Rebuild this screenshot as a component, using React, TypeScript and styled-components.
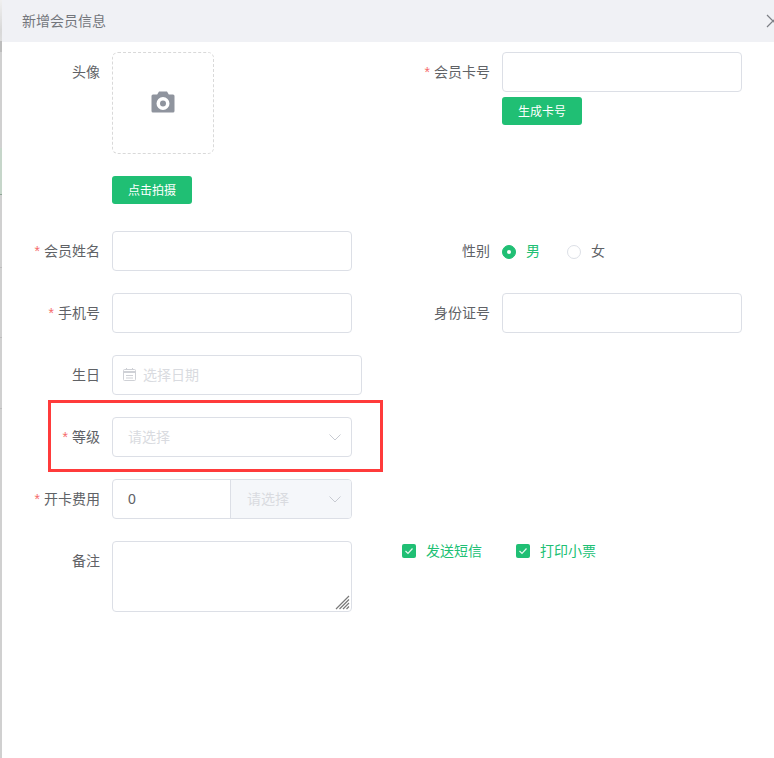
import React from 'react';
import styled, { createGlobalStyle } from 'styled-components';

const GlobalStyle = createGlobalStyle`
  html, body {
    margin: 0;
    padding: 0;
    background: #fff;
  }
  * {
    box-sizing: border-box;
  }
  body {
    font-family: "Liberation Sans", "Noto Sans CJK SC", sans-serif;
    font-size: 14px;
    color: #606266;
  }
`;

const Page = styled.div`
  display: flex;
  width: 774px;
  height: 758px;
  overflow: hidden;
`;

// sliver of the page behind the dialog
const BackdropEdge = styled.div`
  flex: 0 0 2px;
  background: linear-gradient(
    to bottom,
    #f0f0f0 0,
    #d8d8d8 30px,
    #dcdcdc 41px,
    #bdbdbd 41px,
    #bdbdbd 52px,
    #d0d0d0 52px,
    #d0d0d0 148px,
    #c6d6ca 148px,
    #c6d6ca 194px,
    #8fa596 194px,
    #8fa596 195px,
    #d0d0d0 195px,
    #d0d0d0 267px,
    #bdbdbd 267px,
    #bdbdbd 268px,
    #d0d0d0 268px,
    #d0d0d0 337px,
    #bdbdbd 337px,
    #bdbdbd 338px,
    #d0d0d0 338px,
    #d0d0d0 408px,
    #bdbdbd 408px,
    #bdbdbd 409px,
    #d0d0d0 409px
  );
`;

const Dialog = styled.div`
  position: relative;
  flex: 1;
  min-width: 0;
`;

const Header = styled.header`
  display: flex;
  align-items: center;
  justify-content: space-between;
  height: 42px;
  padding: 0 0 2px 20px;
  background: #f0f1f5;
  font-size: 14px;
  color: #73767c;
`;

const CloseIcon = styled.svg`
  width: 8px;
  height: 14px;
  margin-top: 2px;
  flex: none;
`;

const Form = styled.form`
  display: grid;
  grid-template-columns: 388px 384px;
  row-gap: 22px;
  padding-top: 10px;
`;

const TopRow = styled.div`
  grid-column: 1 / -1;
  display: grid;
  grid-template-columns: 388px 384px;
  margin-bottom: 5px;
`;

const Field = styled.div`
  display: flex;
  align-items: flex-start;
`;

const Label = styled.label<{ $wide?: boolean }>`
  flex: 0 0 ${p => (p.$wide ? 100 : 98)}px;
  height: 40px;
  line-height: 40px;
  margin-right: 12px;
  text-align: right;
  font-size: 14px;
  color: #606266;
  white-space: nowrap;
`;

const Required = styled.span`
  color: #f56c6c;
  margin-right: 4px;
`;

const Control = styled.div`
  display: flex;
  flex-direction: column;
  align-items: flex-start;
`;

const AvatarBox = styled.div`
  display: flex;
  align-items: center;
  justify-content: center;
  width: 102px;
  height: 102px;
  padding-bottom: 2px;
  border: 1px dashed #d9d9d9;
  border-radius: 6px;
  margin-bottom: 22px;
`;

const Button = styled.button<{ $top?: number }>`
  width: 80px;
  height: 28px;
  margin-top: ${p => p.$top ?? 0}px;
  padding: 0 0 2px;
  border: none;
  border-radius: 3px;
  background: #20bf74;
  color: #fff;
  font-family: inherit;
  font-size: 12px;
`;

const Input = styled.div<{ $width?: number }>`
  display: flex;
  align-items: center;
  width: ${p => p.$width ?? 240}px;
  height: 40px;
  padding: 0 15px 2px;
  border: 1px solid #dcdfe6;
  border-radius: 4px;
  background: #fff;
  font-size: 14px;
  color: #606266;
`;

const DateInput = styled(Input)`
  padding-left: 9px;
  gap: 6px;
`;

const Placeholder = styled.span`
  flex: 1;
  color: #d9dbe0;
`;

const Chevron = styled.svg`
  width: 16px;
  height: 16px;
  flex: none;
  margin-right: -7px;
  margin-bottom: -2px;
`;

const InputGroup = styled.div`
  display: flex;
  width: 240px;
  height: 40px;
  border: 1px solid #dcdfe6;
  border-radius: 4px;
  overflow: hidden;
`;

const GroupValue = styled.div`
  display: flex;
  align-items: center;
  width: 117px;
  padding-left: 15px;
  font-size: 14px;
  color: #606266;
`;

const GroupSelect = styled.div`
  display: flex;
  align-items: center;
  flex: 1;
  padding: 0 15px 2px 16px;
  border-left: 1px solid #dcdfe6;
  background: #f5f7fa;
  font-size: 14px;
`;

const RadioGroup = styled.div`
  display: flex;
  align-items: center;
  height: 40px;
`;

const RadioItem = styled.span<{ $checked?: boolean }>`
  display: flex;
  align-items: center;
  gap: 10px;
  margin-right: 27px;
  font-size: 14px;
  line-height: 18px;
  color: ${p => (p.$checked ? '#20bf74' : '#606266')};
`;

const RadioDot = styled.span<{ $checked?: boolean }>`
  display: flex;
  align-items: center;
  justify-content: center;
  width: 14px;
  height: 14px;
  margin-top: 2px;
  border-radius: 50%;
  border: 1px solid ${p => (p.$checked ? '#20bf74' : '#dcdfe6')};
  background: ${p => (p.$checked ? '#20bf74' : '#fff')};

  &::after {
    content: '';
    width: 4px;
    height: 4px;
    border-radius: 50%;
    background: #fff;
  }
`;

const TextArea = styled.div`
  position: relative;
  width: 240px;
  height: 71px;
  border: 1px solid #dcdfe6;
  border-radius: 4px;
`;

const ResizeGrip = styled.svg`
  position: absolute;
  right: 1px;
  bottom: 1px;
  width: 15px;
  height: 15px;
`;

const CheckRow = styled.div`
  display: flex;
  align-self: start;
  gap: 34px;
  margin-left: 12px;
  padding-top: 3px;
`;

const CheckItem = styled.span`
  display: flex;
  align-items: center;
  gap: 10px;
  font-size: 14px;
  line-height: 14px;
  color: #20bf74;
`;

const CheckBox = styled.span`
  display: flex;
  align-items: center;
  justify-content: center;
  width: 14px;
  height: 14px;
  border-radius: 2px;
  background: #20bf74;
`;

// annotation drawn on top of the screenshot
const Highlight = styled.div`
  position: absolute;
  left: 46px;
  top: 400px;
  width: 335px;
  height: 72px;
  border: 3px solid #ff3b3b;
  pointer-events: none;
`;

const ChevronDown = () => (
  <Chevron viewBox="0 0 16 16" fill="none" stroke="#c8cbd2" strokeWidth="1">
    <path d="M2.500 5.500 8 11l5.500-5.500" />
  </Chevron>
);

const Tick = () => (
  <svg width="10" height="10" viewBox="0 0 10 10" fill="none" stroke="#e6f8ef" strokeWidth="1.200">
    <path d="M1.500 5 4 7.500 8.500 2.500" />
  </svg>
);

const App: React.FC = () => (
  <Page>
    <GlobalStyle />
    <BackdropEdge />
    <Dialog>
      <Header>
        新增会员信息
        <CloseIcon viewBox="0 0 8 14" fill="none" stroke="#7c7f85" strokeWidth="1.200">
          <path d="M1 1 7 7 1 13M7 7l6-6M7 7l6 6" />
        </CloseIcon>
      </Header>
      <Form>
        <TopRow>
          <Field>
            <Label>头像</Label>
            <Control>
              <AvatarBox>
                <svg width="24" height="22" viewBox="0 0 24 22">
                  <path
                    fill="#8f949e"
                    fillRule="evenodd"
                    d="M8 0.500h8l1.800 3H22a1.500 1.500 0 0 1 1.500 1.500v15a1.500 1.500 0 0 1-1.500 1.500H2A1.500 1.500 0 0 1 .5 20V5A1.500 1.500 0 0 1 2 3.500h4.200zM12 6a6.500 6.500 0 1 0 0 13 6.500 6.500 0 0 0 0-13zm0 3.500a3 3 0 1 1 0 6 3 3 0 0 1 0-6z"
                  />
                </svg>
              </AvatarBox>
              <Button type="button">点击拍摄</Button>
            </Control>
          </Field>
          <Field>
            <Label $wide><Required>*</Required>会员卡号</Label>
            <Control>
              <Input />
              <Button type="button" $top={5}>生成卡号</Button>
            </Control>
          </Field>
        </TopRow>

        <Field>
          <Label><Required>*</Required>会员姓名</Label>
          <Input />
        </Field>
        <Field>
          <Label $wide>性别</Label>
          <RadioGroup>
            <RadioItem $checked><RadioDot $checked />男</RadioItem>
            <RadioItem><RadioDot />女</RadioItem>
          </RadioGroup>
        </Field>

        <Field>
          <Label><Required>*</Required>手机号</Label>
          <Input />
        </Field>
        <Field>
          <Label $wide>身份证号</Label>
          <Input />
        </Field>

        <Field>
          <Label>生日</Label>
          <DateInput $width={250}>
            <svg width="15" height="15" viewBox="0 0 15 15" fill="none" stroke="#cfd1d6" strokeWidth="1">
              <rect x="1.500" y="2.500" width="12" height="11" rx="1" />
              <path d="M1.500 4.500h12M1.500 5.500h12M4.500 1v2M10.500 1v2M4 8.500h7M4 11h7" />
            </svg>
            <Placeholder>选择日期</Placeholder>
          </DateInput>
        </Field>
        <div />

        <Field>
          <Label><Required>*</Required>等级</Label>
          <Input>
            <Placeholder>请选择</Placeholder>
            <ChevronDown />
          </Input>
        </Field>
        <div />

        <Field>
          <Label><Required>*</Required>开卡费用</Label>
          <InputGroup>
            <GroupValue>0</GroupValue>
            <GroupSelect>
              <Placeholder>请选择</Placeholder>
              <ChevronDown />
            </GroupSelect>
          </InputGroup>
        </Field>
        <div />

        <Field>
          <Label>备注</Label>
          <TextArea>
            <ResizeGrip viewBox="0 0 15 15" stroke="#7a7a7a" strokeWidth="1.200">
              <path d="M1 14 14 1M4.500 14 14 4.500M8 14l6-6M11.500 14l2.500-2.500" />
            </ResizeGrip>
          </TextArea>
        </Field>
        <CheckRow>
          <CheckItem><CheckBox><Tick /></CheckBox>发送短信</CheckItem>
          <CheckItem><CheckBox><Tick /></CheckBox>打印小票</CheckItem>
        </CheckRow>
      </Form>
      <Highlight />
    </Dialog>
  </Page>
);

export default App;
